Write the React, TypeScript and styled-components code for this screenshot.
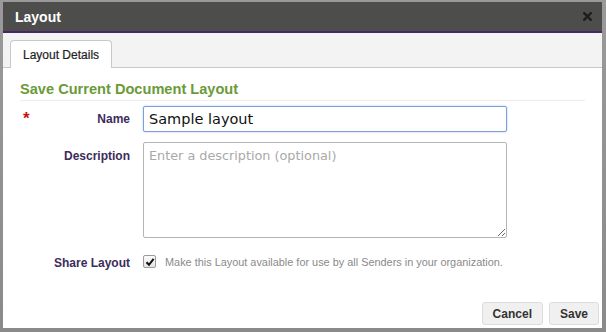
import React from 'react'
import styled, { createGlobalStyle } from 'styled-components'

const GlobalStyle = createGlobalStyle`
  html, body {
    margin: 0;
    padding: 0;
    background: #8e8e8e;
  }
  * {
    box-sizing: border-box;
  }
`

export default function App() {
  return (
    <>
      <GlobalStyle/>
      <S.Frame>
        <S.Dialog>
          <S.Header>
            <S.HeaderTitle>Layout</S.HeaderTitle>
            <S.Close aria-label='close'>
              <svg width='9' height='9' viewBox='0 0 9 9'>
                <path d='M1.2 1.2 L7.8 7.8 M7.8 1.2 L1.2 7.8' stroke='#1e1e1e' strokeWidth='2.4' strokeLinecap='square'/>
              </svg>
            </S.Close>
          </S.Header>

          <S.TabBar>
            <S.Tab>Layout Details</S.Tab>
          </S.TabBar>

          <S.Body>
            <S.SectionTitle>Save Current Document Layout</S.SectionTitle>

            <S.Row $top={5}>
              <S.Label>
                <S.Star>*</S.Star>
                <span>Name</span>
              </S.Label>
              <S.Input defaultValue='Sample layout'/>
            </S.Row>

            <S.Row $top={10}>
              <S.Label $alignTop>
                <span/>
                <span>Description</span>
              </S.Label>
              <S.TextArea placeholder='Enter a description (optional)'/>
            </S.Row>

            <S.Row $top={17}>
              <S.Label>
                <span/>
                <span>Share Layout</span>
              </S.Label>
              <S.CheckRow>
                <S.Check>
                  <svg width='10' height='10' viewBox='0 0 10 10'>
                    <path d='M1.5 5.2 L4 7.8 L8.6 1.8' fill='none' stroke='#111' strokeWidth='2'/>
                  </svg>
                </S.Check>
                <S.CheckText>Make this Layout available for use by all Senders in your organization.</S.CheckText>
              </S.CheckRow>
            </S.Row>
          </S.Body>

          <S.Footer>
            <S.Button>Cancel</S.Button>
            <S.Button>Save</S.Button>
          </S.Footer>
        </S.Dialog>
      </S.Frame>
    </>
  )
}

const S = {
  Frame: styled.div`
    width: 606px;
    height: 332px;
    padding: 2px 4px 4px 3px;
    background: linear-gradient(#9a9a9a, #8a8a8a);
`,

  Dialog: styled.div`
    display: flex;
    flex-direction: column;
    height: 100%;
    background: #ffffff;
    font-family: "Liberation Sans", Arial, sans-serif;
`,

  Header: styled.div`
    display: flex;
    align-items: center;
    justify-content: space-between;
    height: 31px;
    padding: 0 10px 0 12px;
    background: #4d4d4b;
    border-bottom: 2px solid #4a2468;
`,

  HeaderTitle: styled.div`
    color: #ffffff;
    font-size: 14px;
    font-weight: bold;
`,

  Close: styled.div`
    display: flex;
    align-items: center;
    justify-content: center;
    width: 10px;
    height: 10px;
`,

  TabBar: styled.div`
    display: flex;
    align-items: flex-end;
    height: 35px;
    padding-left: 7px;
    background: #f3f3f3;
    border-bottom: 1px solid #c9c9c9;
`,

  Tab: styled.div`
    display: flex;
    align-items: center;
    height: 28px;
    margin-bottom: -1px;
    padding: 0 12px;
    background: #ffffff;
    border: 1px solid #c9c9c9;
    border-bottom: none;
    border-radius: 4px 4px 0 0;
    color: #1e1e1e;
    font-size: 12px;
    -webkit-text-stroke: 0.2px #1e1e1e;
`,

  Body: styled.div`
    display: flex;
    flex-direction: column;
    padding: 0 17px 0 17px;
`,

  SectionTitle: styled.div`
    margin-top: 12px;
    padding-bottom: 2px;
    line-height: 18px;
    color: #6b9a3a;
    font-size: 14.6px;
    font-weight: bold;
    border-bottom: 1px solid #ececec;
`,

  Row: styled.div<{ $top: number }>`
    display: flex;
    align-items: flex-start;
    gap: 13px;
    margin-top: ${p => p.$top}px;
`,

  Label: styled.label<{ $alignTop?: boolean }>`
    display: flex;
    justify-content: space-between;
    align-items: center;
    width: 110px;
    height: ${p => p.$alignTop ? '28px' : 'auto'};
    min-height: 16px;
    align-self: ${p => p.$alignTop ? 'flex-start' : 'center'};
    padding-left: 3px;
    color: #3b2c5c;
    font-size: 12px;
    font-weight: bold;
`,

  Star: styled.span`
    color: #cc1111;
    font-size: 17px;
    line-height: 12px;
    margin-top: -1px;
`,

  Input: styled.input`
    width: 364px;
    height: 26px;
    padding: 0 5px;
    border: 1px solid #7b9fd8;
    border-radius: 2px;
    box-shadow: 0 0 2px rgba(90, 140, 220, 0.5);
    outline: none;
    color: #111111;
    font-family: "DejaVu Sans", Verdana, sans-serif;
    font-size: 14.5px;
`,

  TextArea: styled.textarea`
    width: 364px;
    height: 96px;
    padding: 4px 5px;
    border: 1px solid #b5b5b5;
    border-radius: 2px;
    resize: both;
    outline: none;
    color: #111111;
    font-family: "DejaVu Sans", Verdana, sans-serif;
    font-size: 12.8px;
    line-height: 18px;
    &::placeholder {
      color: #a9a9a9;
    }
`,

  CheckRow: styled.div`
    display: flex;
    align-items: center;
    gap: 9px;
`,

  Check: styled.span`
    display: flex;
    align-items: center;
    justify-content: center;
    width: 13px;
    height: 13px;
    border: 1px solid #9a9a9a;
    border-radius: 2px;
    background: linear-gradient(#fbfbfb, #e4e4e4);
`,

  CheckText: styled.span`
    color: #8a8a8a;
    font-size: 10.9px;
`,

  Footer: styled.div`
    display: flex;
    justify-content: flex-end;
    gap: 6px;
    margin-top: auto;
    padding: 0 3px 3px 0;
`,

  Button: styled.button`
    height: 23px;
    padding: 0 10px;
    background: #f0f0f0;
    border: 1px solid #dddddd;
    border-radius: 3px;
    color: #333333;
    font-family: "Liberation Sans", Arial, sans-serif;
    font-size: 12px;
    font-weight: bold;
`
}
